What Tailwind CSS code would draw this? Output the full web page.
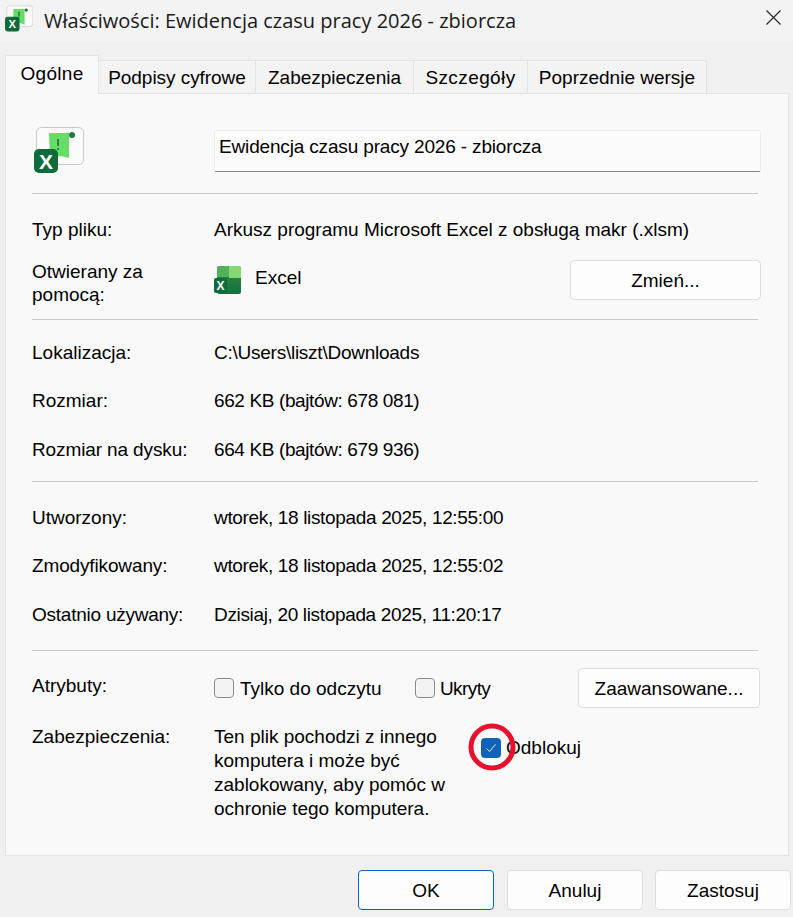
<!DOCTYPE html>
<html lang="pl">
<head>
  <meta charset="UTF-8">
  <title>Właściwości: Ewidencja czasu pracy 2026 - zbiorcza</title>
  <script src="https://cdn.jsdelivr.net/npm/@tailwindcss/browser@4"></script>
</head>
<body class="bg-[#f0f0f0] text-black w-[793px] h-[917px] overflow-hidden font-['Liberation_Sans',Arial,sans-serif] text-[19px] leading-[23px]">

  <!-- Title bar -->
  <header class="h-[43px] bg-[#f3f3f3] flex items-start pl-[5px] pr-[12px] pt-[5px]">
    <svg class="w-[28px] h-[27px]" viewBox="0 0 50 46">
      <rect x="3.500" y="0.500" width="46" height="37" rx="5" fill="#fbfbfb" stroke="#c4c4c4"/>
      <path d="M15 6h20v28l-8-3-12 3z" fill="#66dd66"/>
      <circle cx="38" cy="8" r="3" fill="#1f7a3c"/>
      <path d="M25 11v9" stroke="#16743a" stroke-width="2.500"/>
      <rect x="0" y="20" width="26" height="26" rx="5" fill="#0f6b3c"/>
      <text x="13" y="40" text-anchor="middle" font-family="Liberation Sans" font-weight="700" font-size="20" fill="#fff">X</text>
    </svg>
    <h1 class="ml-[11px] mt-[2px] font-['Open_Sans',sans-serif] text-[20px] text-[#1a1a1a] leading-[27px]">Właściwości: Ewidencja czasu pracy 2026 - zbiorcza</h1>
    <svg class="ml-auto mt-[5px] w-[15px] h-[15px]" viewBox="0 0 15 15"><path d="M.5.5l14 14M14.500.5l-14 14" stroke="#222" stroke-width="1.100" fill="none"/></svg>
  </header>

  <!-- Tabs -->
  <nav class="flex items-end h-[51px] pl-[5px] relative z-10 mb-[-1px]">
    <div class="w-[94px] h-[39px] pt-[6px] text-center bg-[#f9f9f9] border border-b-0 border-[#e5e5e5] tracking-[0.3px]">Ogólne</div>
    <div class="w-[157px] h-[34px] pt-[5px] text-center bg-[#f3f3f3] border-y border-r border-[#e3e3e3] tracking-[-0.05px]">Podpisy cyfrowe</div>
    <div class="w-[158px] h-[34px] pt-[5px] text-center bg-[#f3f3f3] border-y border-r border-[#e3e3e3]">Zabezpieczenia</div>
    <div class="w-[114px] h-[34px] pt-[5px] text-center bg-[#f3f3f3] border-y border-r border-[#e3e3e3] tracking-[0.4px]">Szczegóły</div>
    <div class="w-[179px] h-[34px] pt-[5px] text-center bg-[#f3f3f3] border-y border-r border-[#e3e3e3]">Poprzednie wersje</div>
  </nav>

  <!-- Panel -->
  <main class="relative ml-[5px] w-[784px] h-[763px] bg-[#f9f9f9] border border-[#e5e5e5] pl-[26px] pr-[26px]">
    <div class="flex h-[99px] pt-[33px]">
      <svg class="w-[50px] h-[46px] ml-[2px]" viewBox="0 0 50 46">
        <rect x="2.500" y="0.500" width="47" height="37" rx="5" fill="#fbfbfb" stroke="#c8c8c8"/>
        <path d="M15 7q0-1 1-1h19v25l-8-2-11 2z" fill="#66dd66"/>
        <circle cx="38" cy="8" r="3" fill="#1f7a3c"/>
        <path d="M24 12v7M24 21v2" stroke="#16743a" stroke-width="1.600"/>
        <rect x="0" y="22" width="24" height="24" rx="5" fill="#0f6b3c"/>
        <text x="12" y="42" text-anchor="middle" font-family="Liberation Sans" font-weight="700" font-size="21" fill="#fff">X</text>
      </svg>
      <div class="ml-[130px] w-[547px] h-[42px] mt-[3px] pl-[4px] pt-[4px] bg-[#fbfbfb] border border-[#ececec] border-b-[#868686] rounded-[2px] tracking-[-0.16px]">Ewidencja czasu pracy 2026 - zbiorcza</div>
    </div>
    <hr class="border-[#c9c9c9] w-[726px]">

    <div class="flex items-center h-[48px] mt-[11px]"><span class="w-[182px]">Typ pliku:</span><span>Arkusz programu Microsoft Excel z obsługą makr (.xlsm)</span></div>
    <div class="flex h-[59px] mt-[7px]">
      <span class="w-[160px] mr-[22px]">Otwierany za pomocą:</span>
      <svg class="w-[27px] h-[30px] mt-[5px]" viewBox="0 0 27 30">
        <defs>
          <linearGradient id="xl" x1="0" x2="0" y1="0" y2="1"><stop offset="0" stop-color="#2f8f46"/><stop offset="1" stop-color="#15703a"/></linearGradient>
        </defs>
        <rect x="3" y="1" width="24" height="28" rx="2.500" fill="url(#xl)"/>
        <path d="M15 1h9.500a2.500 2.500 0 0 1 2.500 2.500V13H15z" fill="#86d873"/>
        <path d="M3 12V3.500A2.500 2.500 0 0 1 5.500 1H15v11z" fill="#52b25c"/>
        <rect x="0" y="13" width="13" height="15" rx="2" fill="#0f6b3c"/>
        <text x="6.500" y="25" text-anchor="middle" font-family="Liberation Sans" font-weight="700" font-size="12" fill="#fff">X</text>
      </svg>
      <span class="ml-[14px] mt-[6px]">Excel</span>
      <button class="absolute left-[564px] top-[166px] w-[191px] h-[40px] bg-[#fdfdfd] border border-[#dedede] rounded-[4px]">Zmień...</button>
    </div>
    <hr class="border-[#c9c9c9] w-[726px]">

    <div class="mt-[8px]">
      <div class="flex items-center h-[48px]"><span class="w-[182px]">Lokalizacja:</span><span class="tracking-[-0.25px]">C:\Users\liszt\Downloads</span></div>
      <div class="flex items-center h-[49px]"><span class="w-[182px]">Rozmiar:</span><span class="tracking-[-0.38px]">662 KB (bajtów: 678 081)</span></div>
      <div class="flex items-center h-[48px]"><span class="w-[182px] tracking-[-0.12px]">Rozmiar na dysku:</span><span class="tracking-[-0.38px]">664 KB (bajtów: 679 936)</span></div>
    </div>
    <hr class="border-[#c9c9c9] w-[726px] mt-[8px]">

    <div class="mt-[11px]">
      <div class="flex items-center h-[48px]"><span class="w-[182px]">Utworzony:</span><span class="tracking-[-0.34px]">wtorek, 18 listopada 2025, 12:55:00</span></div>
      <div class="flex items-center h-[49px]"><span class="w-[182px] tracking-[-0.14px]">Zmodyfikowany:</span><span class="tracking-[-0.34px]">wtorek, 18 listopada 2025, 12:55:02</span></div>
      <div class="flex items-center h-[48px]"><span class="w-[182px] tracking-[-0.24px]">Ostatnio używany:</span><span class="tracking-[-0.34px]">Dzisiaj, 20 listopada 2025, 11:20:17</span></div>
    </div>
    <hr class="border-[#c9c9c9] w-[726px] mt-[12px]">

    <div class="flex items-center h-[40px] mt-[17px]">
      <span class="w-[182px] mt-[-6px]">Atrybuty:</span>
      <span class="w-[20px] h-[20px] rounded-[4px] bg-[#f3f3f3] border border-[#8a8a8a]"></span>
      <span class="ml-[6px]">Tylko do odczytu</span>
      <span class="absolute left-[409px] w-[20px] h-[20px] rounded-[4px] bg-[#f3f3f3] border border-[#8a8a8a]"></span>
      <span class="absolute left-[434px] tracking-[-0.6px]">Ukryty</span>
      <button class="absolute left-[572px] w-[182px] h-[40px] bg-[#fdfdfd] border border-[#dedede] rounded-[4px]">Zaawansowane...</button>
    </div>

    <div class="flex mt-[17px] leading-[24px]">
      <span class="w-[182px]">Zabezpieczenia:</span>
      <p class="w-[250px]">Ten plik pochodzi z innego komputera i może być zablokowany, aby pomóc w ochronie tego komputera.</p>
      <span class="ml-[17px] mt-[13px] w-[20px] h-[20px] rounded-[4px] bg-[#0f62b9] flex items-center justify-center">
        <svg class="w-[12px] h-[12px]" viewBox="0 0 12 12"><path d="M1.500 6.500l3 3 6-7" stroke="#e6eef8" stroke-width="1" fill="none"/></svg>
      </span>
      <span class="ml-[5px] mt-[11px]">Odblokuj</span>
    </div>

    <!-- Red annotation circle -->
    <svg class="absolute left-[462px] top-[629px] w-[48px] h-[48px]" viewBox="0 0 48 48"><circle cx="24" cy="24" r="21" fill="none" stroke="#e8112d" stroke-width="5"/></svg>
  </main>

  <!-- Footer buttons -->
  <footer class="flex mt-[14px] pl-[358px]">
    <button class="w-[136px] h-[40px] bg-[#fdfdfd] border border-[#0067c0] rounded-[4px]">OK</button>
    <button class="w-[136px] h-[40px] ml-[13px] bg-[#fdfdfd] border border-[#dedede] rounded-[4px]">Anuluj</button>
    <button class="w-[136px] h-[40px] ml-[12px] bg-[#fdfdfd] border border-[#dedede] rounded-[4px]">Zastosuj</button>
  </footer>
</body>
</html>
